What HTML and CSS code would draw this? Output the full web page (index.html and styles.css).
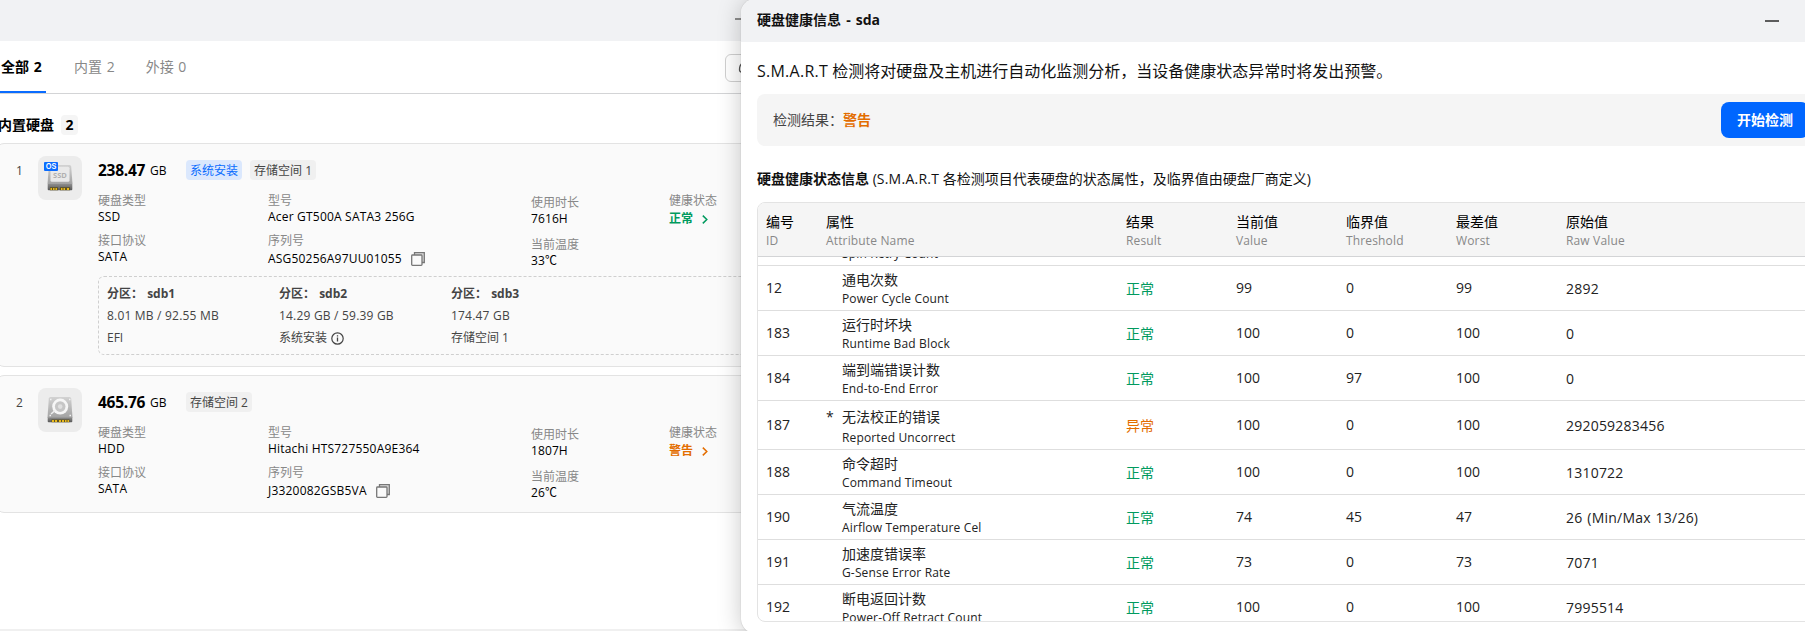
FILE: index.html
```html
<!DOCTYPE html>
<html lang="zh-CN">
<head>
<meta charset="utf-8">
<title>硬盘健康信息</title>
<link rel="stylesheet" href="styles.css">
</head>
<body>
<svg class="defs" width="0" height="0">
  <defs>
    <linearGradient id="face" x1="0" y1="0" x2="0" y2="1"><stop offset="0" stop-color="#d2d2d2"/><stop offset="1" stop-color="#a2a2a2"/></linearGradient>
    <linearGradient id="base" x1="0" y1="0" x2="0" y2="1"><stop offset="0" stop-color="#8d8d8d"/><stop offset="1" stop-color="#585858"/></linearGradient>
    <symbol id="copy" viewBox="0 0 14 14">
      <path d="M3.5 3V.7h9.8v9.8H11" fill="#ddd" stroke="#777" stroke-width="1.3"/>
      <rect x=".7" y="3" width="10.3" height="10.3" rx=".8" fill="#fafafa" stroke="#777" stroke-width="1.3"/>
    </symbol>
    <symbol id="chevron" viewBox="0 0 6 9"><path d="M.8.6l4 3.900-4 3.900" fill="none" stroke="currentColor" stroke-width="1.5"/></symbol>
  </defs>
</svg>

<main class="manager">
  <div class="titlebar"><span class="minimize dim"></span></div>
  <nav class="tabs">
    <span class="tab active">全部 2</span>
    <span class="tab">内置 2</span>
    <span class="tab">外接 0</span>
    <button class="refresh"><svg width="18" height="16" viewBox="0 0 18 16"><path d="M4.500 2Q1.500 4 1.500 8.500q0 2.500 2 2.500" fill="none" stroke="#555" stroke-width="1.3"/></svg></button>
  </nav>
  <h2 class="section">内置硬盘<span class="count">2</span></h2>

  <article class="disk">
    <span class="index">1</span>
    <div class="thumb">
      <svg width="44" height="44" viewBox="0 0 44 44">
        <path d="M12.500 9h19q1.500 0 1.700 1.500L34.500 28h-25l1.300-17.500Q11 9 12.500 9z" fill="url(#face)"/>
        <rect x="12.500" y="10.800" width="19" height="15" rx="1.500" fill="#e9e9e9"/>
        <path d="M9.700 28h24.600v5.200q0 1-1 1H10.700q-1 0-1-1z" fill="url(#base)"/>
        <path d="M12 31.200h8v3h-8zM22 31.200h10v3H22z" fill="#5d5122"/>
        <path d="M12.500 32h1.500v2h-1.500zM15 32h1.500v2H15zM17.500 32H19v2h-1.500zM23 32h1.500v2H23zM25.500 32H27v2h-1.500zM29 32h2v2h-2z" fill="#e8b91c"/>
        <text x="22" y="21.800" class="svg-ssd">SSD</text>
        <rect x="6" y="6" width="14" height="9" rx="1" fill="#0a6cff"/>
        <text x="13" y="13.200" class="svg-os">OS</text>
      </svg>
    </div>
    <div class="body">
      <div class="head"><b class="size">238.47</b><span class="unit">GB</span><span class="tag blue">系统安装</span><span class="tag">存储空间 1</span></div>
      <div class="fields">
        <dl><dt>硬盘类型</dt><dd>SSD</dd><dt>接口协议</dt><dd>SATA</dd></dl>
        <dl><dt>型号</dt><dd>Acer GT500A SATA3 256G</dd><dt>序列号</dt><dd class="tall">ASG50256A97UU01055<svg class="copy" width="14" height="14"><use href="#copy"/></svg></dd></dl>
        <dl class="usage"><dt>使用时长</dt><dd>7616H</dd><dt>当前温度</dt><dd>33℃</dd></dl>
        <dl><dt>健康状态</dt><dd class="tall good">正常<svg class="chev" width="6" height="9"><use href="#chevron"/></svg></dd></dl>
      </div>
      <div class="partitions">
        <div><b>分区： <span>sdb1</span></b><p class="amount">8.01 MB / 92.55 MB</p><p>EFI</p></div>
        <div><b>分区： <span>sdb2</span></b><p class="amount">14.29 GB / 59.39 GB</p><p class="with-icon">系统安装<svg width="13" height="13" viewBox="0 0 13 13"><circle cx="6.500" cy="6.500" r="5.700" fill="none" stroke="#444" stroke-width="1.200"/><path d="M6.500 5.600v4M6.500 3.200v1.300" stroke="#444" stroke-width="1.300"/></svg></p></div>
        <div><b>分区： <span>sdb3</span></b><p class="amount">174.47 GB</p><p>存储空间 1</p></div>
      </div>
    </div>
  </article>

  <article class="disk">
    <span class="index">2</span>
    <div class="thumb">
      <svg width="44" height="44" viewBox="0 0 44 44">
        <path d="M12.500 9h19q1.500 0 1.700 1.500L34.500 30h-25l1.300-19.500Q11 9 12.500 9z" fill="url(#face)"/>
        <path d="M9.700 29.500h24.600v3.700q0 1-1 1H10.700q-1 0-1-1z" fill="url(#base)"/>
        <circle cx="22.200" cy="18.600" r="8" fill="#f6f6f6"/>
        <circle cx="22.200" cy="18.600" r="5.300" fill="#c6c6c6"/>
        <circle cx="22.200" cy="18.600" r="2.300" fill="#e0e0e0"/>
        <path d="M13 26l4-3.500" stroke="#eee" stroke-width="1.600"/>
        <path d="M12 11.500h1.500M31 11.500h1.500M11.500 27.500h1.500M31.500 27.500H33" stroke="#f2f2f2" stroke-width="1.300"/>
        <path d="M13.500 31.500h18v2.700h-18z" fill="#5d5122"/>
        <path d="M14 32h2v2h-2zM17 32h2v2h-2zM21 32h2v2h-2zM24 32h2v2h-2zM27 32h1.500v2H27zM29.500 32H31v2h-1.500z" fill="#e8b91c"/>
      </svg>
    </div>
    <div class="body">
      <div class="head"><b class="size">465.76</b><span class="unit">GB</span><span class="tag">存储空间 2</span></div>
      <div class="fields">
        <dl><dt>硬盘类型</dt><dd>HDD</dd><dt>接口协议</dt><dd>SATA</dd></dl>
        <dl><dt>型号</dt><dd>Hitachi HTS727550A9E364</dd><dt>序列号</dt><dd class="tall">J3320082GSB5VA<svg class="copy" width="14" height="14"><use href="#copy"/></svg></dd></dl>
        <dl class="usage"><dt>使用时长</dt><dd>1807H</dd><dt>当前温度</dt><dd>26℃</dd></dl>
        <dl><dt>健康状态</dt><dd class="tall warn">警告<svg class="chev" width="6" height="9"><use href="#chevron"/></svg></dd></dl>
      </div>
    </div>
  </article>
  <div class="footer-line"></div>
</main>

<section class="dialog">
  <header class="titlebar"><span class="title">硬盘健康信息 - sda</span><span class="minimize"></span></header>
  <div class="content">
    <p class="intro"><span class="smart">S.M.A.R.T</span> 检测将对硬盘及主机进行自动化监测分析，当设备健康状态异常时将发出预警。</p>
    <div class="result"><span>检测结果：<b class="warn">警告</b></span><button class="start">开始检测</button></div>
    <h3 class="caption"><b>硬盘健康状态信息</b> (<span class="smart">S.M.A.R.T</span> 各检测项目代表硬盘的状态属性，及临界值由硬盘厂商定义)</h3>
    <div class="table">
      <div class="row thead">
        <div>编号<small>ID</small></div><div>属性<small>Attribute Name</small></div><div>结果<small>Result</small></div><div>当前值<small>Value</small></div><div>临界值<small>Threshold</small></div><div>最差值<small>Worst</small></div><div>原始值<small>Raw Value</small></div>
      </div>
      <div class="rows">
        <div class="row partial"><i></i><div class="name"><small>Spin Retry Count</small></div></div>
        <div class="row"><i>12</i><div class="name">通电次数<small>Power Cycle Count</small></div><em>正常</em><i>99</i><i>0</i><i>99</i><u>2892</u></div>
        <div class="row"><i>183</i><div class="name">运行时坏块<small>Runtime Bad Block</small></div><em>正常</em><i>100</i><i>0</i><i>100</i><u>0</u></div>
        <div class="row"><i>184</i><div class="name">端到端错误计数<small>End-to-End Error</small></div><em>正常</em><i>100</i><i>97</i><i>100</i><u>0</u></div>
        <div class="row flagged"><i>187</i><div class="name"><span class="star">*</span>无法校正的错误<small>Reported Uncorrect</small></div><em class="bad">异常</em><i>100</i><i>0</i><i>100</i><u>292059283456</u></div>
        <div class="row"><i>188</i><div class="name">命令超时<small>Command Timeout</small></div><em>正常</em><i>100</i><i>0</i><i>100</i><u>1310722</u></div>
        <div class="row"><i>190</i><div class="name">气流温度<small>Airflow Temperature Cel</small></div><em>正常</em><i>74</i><i>45</i><i>47</i><u>26 (Min/Max 13/26)</u></div>
        <div class="row"><i>191</i><div class="name">加速度错误率<small>G-Sense Error Rate</small></div><em>正常</em><i>73</i><i>0</i><i>73</i><u>7071</u></div>
        <div class="row"><i>192</i><div class="name">断电返回计数<small>Power-Off Retract Count</small></div><em>正常</em><i>100</i><i>0</i><i>100</i><u>7995514</u></div>
      </div>
    </div>
  </div>
</section>
</body>
</html>
```
FILE: styles.css
```css
* { box-sizing: border-box; margin: 0; padding: 0; }
body {
  position: relative;
  width: 1805px;
  height: 631px;
  overflow: hidden;
  background: #fff;
  color: #000;
  font: 12px/16px "Open Sans", "Noto Sans CJK SC", sans-serif;
  white-space: nowrap;
}
button { border: 0; font: inherit; }
.defs { position: absolute; }
.good { color: #009a5e; }
.warn { color: #e36d00; }

/* Storage manager window */
.manager { display: flex; flex-direction: column; height: 631px; width: 960px; }
.titlebar { display: flex; align-items: center; justify-content: space-between; background: #f1f2f4; }
.manager .titlebar { height: 41px; padding-left: 735px; }
.minimize { width: 14px; height: 2px; background: #5c5c5c; }
.minimize.dim { background: #8c8c8c; margin-top: -3px; }
.tabs { display: flex; align-items: flex-start; height: 53px; border-bottom: 1px solid #d3d4d6; font-size: 14px; line-height: 52px; color: #888; word-spacing: 1px; }
.tab { height: 52px; margin-right: 31px; }
.tab.active { width: 46px; padding-left: 1px; margin-right: 28px; font-weight: 700; color: #000; border-bottom: 2px solid #0a6cff; }
.refresh { margin: 13px 0 0 auto; width: 235px; height: 28px; padding: 6px 12px; border: 1px solid #d0d0d0; border-radius: 6px; background: #fff; display: flex; }
.section { display: flex; align-items: center; gap: 8px; height: 49px; padding-top: 13px; margin-left: -2px; font-size: 14px; font-weight: 700; }
.count { width: 17px; height: 20px; margin-left: -1px; line-height: 20px; border-radius: 4px; background: #f5f5f5; text-align: center; }
.disk { display: flex; align-items: flex-start; margin: 0 0 8px -4px; padding: 12px 0 11px 19px; border: 1px solid #e3e3e3; border-radius: 8px; background: #fafafa; }
.index { width: 22px; line-height: 30px; color: #444; }
.thumb { width: 44px; height: 44px; border-radius: 8px; background: #ececec; }
.thumb svg { display: block; }
.svg-ssd { font: 700 7.500px "Open Sans", sans-serif; fill: #b0b0b0; text-anchor: middle; }
.svg-os { font: 600 7.500px Inter, sans-serif; fill: #fff; text-anchor: middle; }
.body { flex: 1; margin-left: 16px; }
.head { display: flex; align-items: center; height: 28px; }
.size { width: 52px; padding-bottom: 1px; font-size: 15.500px; letter-spacing: -.25px; }
.unit { width: 36px; padding-top: 1px; }
.tag { height: 20px; margin-right: 8px; padding: 0 4px; border-radius: 4px; background: #f0f0f0; color: #444; line-height: 21px; }
.tag.blue { background: #dbe8fd; color: #0a6cff; }
.fields { display: grid; grid-template-columns: 170px 263px 138px 1fr; margin-top: 9px; height: 76px; }
dt { color: #888; }
dd { letter-spacing: .2px; }
dd + dt { margin-top: 8px; }
.usage { padding-top: 2px; }
.usage dt + dd { letter-spacing: .1px; }
.usage dd + dt { margin-top: 10px; }
.tall { display: flex; align-items: center; height: 20px; }
.tall.good, .tall.warn { font-weight: 700; letter-spacing: 0; }
.copy { margin-left: 9px; }
.chev { margin-left: 9px; }
.partitions { display: grid; grid-template-columns: 172px 172px 1fr; margin-top: 7px; height: 79px; padding: 6px 8px 5px; border: 1px dashed #cfcfcf; border-radius: 6px; line-height: 22px; color: #444; }
.partitions span { margin-left: 1px; }
.partitions b { display: block; }
.amount { letter-spacing: .2px; }
.with-icon { display: flex; align-items: center; gap: 4px; }
.footer-line { margin-top: auto; height: 2px; background: #f0f0f0; }

/* Health dialog */
.dialog {
  position: absolute;
  left: 741px;
  top: -1px;
  width: 1100px;
  height: 634px;
  border-radius: 14px;
  background: #fff;
  box-shadow: 0 0 1px rgba(0,0,0,.3), 0 2px 24px rgba(0,0,0,.22);
  overflow: hidden;
}
.dialog .titlebar { height: 43px; padding: 0 62px 0 16px; font-size: 14px; font-weight: 700; color: #111; }
.title { padding-bottom: 2px; word-spacing: 1.500px; }
.content { padding: 0 20px 0 16px; }
.intro { height: 52px; padding-top: 17px; font-size: 16px; line-height: 24px; color: #111; }
.smart { letter-spacing: .25px; }
.result { display: flex; align-items: center; justify-content: space-between; height: 52px; padding: 0 12px 0 16px; border-radius: 8px; background: #f5f5f5; font-size: 14px; color: #444; }
.start { width: 88px; height: 36px; border-radius: 8px; background: #0066ff; color: #fff; font-weight: 700; }
.caption { height: 56px; padding-top: 23px; font-size: 14px; line-height: 20px; font-weight: 400; color: #111; }
.table { height: 420px; border: 1px solid #e3e3e3; border-radius: 8px; overflow: hidden; color: #222; font-size: 14px; }
.row { display: grid; grid-template-columns: 60px 300px 110px 110px 110px 110px 1fr; align-items: start; height: 45px; padding-left: 8px; border-bottom: 1px solid #dedede; line-height: 18px; }
.row small { display: block; padding-top: 1px; font-size: 12px; letter-spacing: .15px; }
.thead { height: 54px; padding-top: 10px; background: #f5f5f5; border-color: #d3d4d6; color: #000; }
.thead small { color: #888; }
.rows { height: 364px; overflow: hidden; }
.rows .partial { margin-top: -36px; }
.partial .name { padding-top: 23px; }
.row i, .row em, .row u { font-style: normal; text-decoration: none; line-height: 44px; }
.row em, .row u { padding-top: 1px; }
.row u { letter-spacing: .22px; word-spacing: 1px; }
.row em { color: #009a5e; }
.row em.bad { color: #e36d00; }
.name { position: relative; padding: 5px 0 0 16px; }
.star { position: absolute; left: 0; }
.flagged { height: 49px; }
.flagged i, .flagged em, .flagged u { line-height: 48px; }
.flagged .name { padding-top: 7px; }
.flagged small { padding-top: 3px; }
```
